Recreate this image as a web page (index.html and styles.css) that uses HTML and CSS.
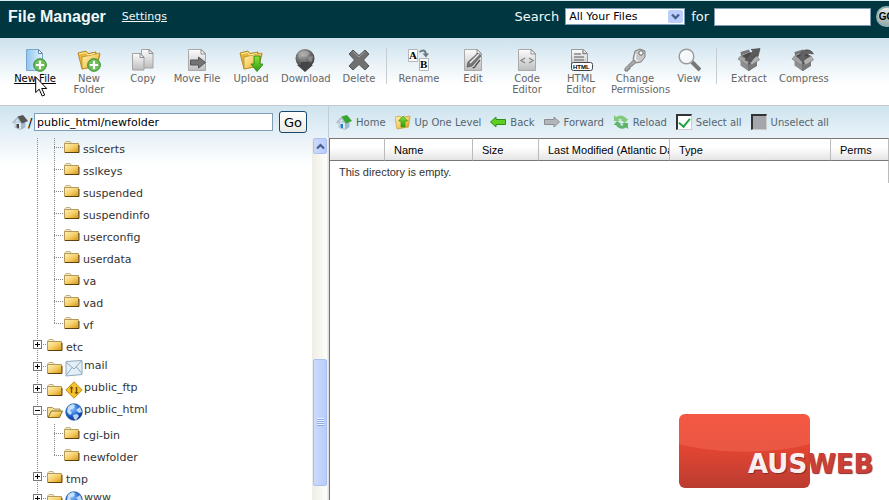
FILE: index.html
```html
<!DOCTYPE html>
<html lang="en">
<head>
    <meta charset="UTF-8">
    <meta name="viewport" content="width=device-width, initial-scale=1.0">
    <title>File Manager</title>
    <link rel="stylesheet" href="styles.css">
</head>
<body>
    <!-- shared icon shapes -->
    <svg class="sprites" width="0" height="0" aria-hidden="true">
        <defs>
            <linearGradient id="gold" x1="0" y1="0" x2="1" y2="1">
                <stop offset="0" stop-color="#fff3bd"/>
                <stop offset=".5" stop-color="#f6d06a"/>
                <stop offset="1" stop-color="#d9920f"/>
            </linearGradient>
            <linearGradient id="paper" x1="0" y1="0" x2="0" y2="1">
                <stop offset="0" stop-color="#fdfdfd"/>
                <stop offset="1" stop-color="#bdbdbd"/>
            </linearGradient>
            <linearGradient id="bluepaper" x1="0" y1="0" x2="1" y2="0">
                <stop offset="0" stop-color="#8fc4ee"/>
                <stop offset="1" stop-color="#e6f4fd"/>
            </linearGradient>
            <linearGradient id="leaf" x1="0" y1="0" x2="0" y2="1">
                <stop offset="0" stop-color="#8be53c"/>
                <stop offset="1" stop-color="#2c9a12"/>
            </linearGradient>
            <radialGradient id="ball" cx=".4" cy=".3" r=".7">
                <stop offset="0" stop-color="#aaa"/>
                <stop offset="1" stop-color="#3c3c3c"/>
            </radialGradient>
            <radialGradient id="earth" cx=".4" cy=".3" r=".7">
                <stop offset="0" stop-color="#8fc3ff"/>
                <stop offset=".6" stop-color="#2268d0"/>
                <stop offset="1" stop-color="#0a2d80"/>
            </radialGradient>
        </defs>
        <symbol id="folder" viewBox="0 0 16 14">
            <path d="M1 4V2.500L2 1.500h4L7.500 3.500" fill="#f4ecd0" stroke="#c4b078"/>
            <path d="M.5 3.500h14v9H.5z" fill="url(#gold)" stroke="#b39a5c"/>
            <path d="M1 12.500h14V5" fill="none" stroke="#5c4210"/>
        </symbol>
        <symbol id="folder-open" viewBox="0 0 16 14">
            <path d="M.5 12V2.500h5L7 4h6v2" fill="#f5e09a" stroke="#a8925a"/>
            <path d="M1 12.500L4.500 6h11L12.500 12.500z" fill="url(#gold)" stroke="#8a6a20"/>
        </symbol>
        <symbol id="bigfolder" viewBox="0 0 24 24">
            <path d="M1 5l8-2 2 2.500 8-1.500v3l4-1-3 12-15 3z" fill="#e9b733" stroke="#a87a10" stroke-width=".8"/>
            <path d="M5 9l18-4-4 13-14 3z" fill="url(#gold)" stroke="#b88a1c" stroke-width=".8"/>
            <path d="M2 6l7-1.500L10.500 7l7.500-1.500" fill="none" stroke="#fff2b0"/>
        </symbol>
        <symbol id="page" viewBox="0 0 24 24">
            <path d="M3.500 1.500h13l4 4v17h-17z" fill="url(#paper)" stroke="#a9a9a9"/>
            <path d="M16 1.500v4.500h4.500z" fill="#fff" stroke="#8e8e8e"/>
        </symbol>
        <symbol id="plus" viewBox="0 0 14 14">
            <circle cx="7" cy="7" r="6.300" fill="#6fbd5b" stroke="#2f8b2d"/>
            <path d="M7 2.800v8.400M2.800 7h8.400" stroke="#fff" stroke-width="2.200"/>
        </symbol>
        <symbol id="box" viewBox="0 0 24 24">
            <path d="M4 8l9-4 7 4v9l-8 6-8-6z" fill="#4c4c4c"/>
            <path d="M3.500 12l8 4.500V23l-8-5.500z" fill="#8d8d8d"/>
            <path d="M11.500 16.500L20 12v6l-8.500 5z" fill="#787878"/>
            <path d="M1 11l3-3.500 8 5-1.500 5z" fill="#a2a2a2" stroke="#737373" stroke-width=".6"/>
            <path d="M22.500 12L20 8l-8 4.500 2.500 4.500z" fill="#b0b0b0" stroke="#777" stroke-width=".6"/>
            <path d="M4 7.500L3.500 4 12 1.500l1 2.500z" fill="#777"/>
        </symbol>
        <symbol id="globe" viewBox="0 0 18 18">
            <circle cx="9" cy="9" r="8.300" fill="url(#earth)" stroke="#24539a" stroke-width=".7"/>
            <path d="M3 4q4-4 7-2l-1 3-4 2 2 3-2 2-3-3zM11 7l4-3 2 5-3 1zM8 12l4-1 2 2-3 4-2-1z" fill="#d9ecff" opacity=".85"/>
        </symbol>
        <symbol id="house" viewBox="0 0 16 16">
            <path d="M3 8h10v5l-4 2.500-6-2z" fill="#dfe9f2" stroke="#8fa6b8" stroke-width=".6"/>
            <path d="M9 9l4-2v6l-4 2.500z" fill="#9db9d0"/>
            <path d="M4.500 10h2.500v4.500l-2.500-1z" class="door"/>
            <path d="M0 8.500L5.500 2.500 10 9l-1 1-3.700-5L1.500 9.500z" fill="#a9bdc8"/>
            <path d="M5.500 2.500L11 1l5 6-6 2.500z" fill="currentColor"/>
        </symbol>
    </svg>

    <header class="topbar">
        <h1>File Manager</h1>
        <a class="settings" href="#">Settings</a>
        <form class="search">
            <label for="scope">Search</label>
            <span class="dropdown">
                <select id="scope">
                    <option>All Your Files</option>
                    <option>This Directory</option>
                </select>
                <span class="arrow"><svg width="9" height="7" viewBox="0 0 9 7"><path d="M1 1.500l3.500 3.500L8 1.500" fill="none" stroke="#4a5f8e" stroke-width="2.400"/></svg></span>
            </span>
            <label for="query">for</label>
            <input type="text" id="query">
            <button type="submit" class="go-round">GO</button>
        </form>
    </header>

    <nav class="toolbar">
        <a href="#" class="tool active"><svg viewBox="0 0 24 24"><path d="M3.500 1.500h12l4 4v17h-16z" fill="url(#bluepaper)" stroke="#78a8cf"/><path d="M15.500 1.500v4h4z" fill="#fff" stroke="#5c86a8"/><use href="#plus" x="10" y="10" width="14" height="14"/></svg>New File</a>
        <a href="#" class="tool"><svg viewBox="0 0 24 24"><use href="#bigfolder" width="24" height="24"/><use href="#plus" x="10" y="10" width="14" height="14"/></svg>New Folder</a>
        <a href="#" class="tool"><svg viewBox="0 0 24 24"><path d="M10.500 1.500h8l3.500 3.500v15H10.500z" fill="url(#paper)" stroke="#a3a3a3"/><path d="M18 1.500V5.500h4z" fill="#fff" stroke="#8e8e8e"/><path d="M1.500 5.500h8l3.500 3.500v13H1.500z" fill="url(#paper)" stroke="#a3a3a3"/><path d="M9 5.500v4h4z" fill="#fff" stroke="#8e8e8e"/></svg>Copy</a>
        <a href="#" class="tool"><svg viewBox="0 0 24 24"><use href="#page" width="24" height="24"/><path d="M5.500 12h8V9l7 5.500-7 5.500v-3h-8z" fill="#737373" stroke="#555"/></svg>Move File</a>
        <a href="#" class="tool"><svg viewBox="0 0 24 24"><use href="#bigfolder" width="24" height="24"/><path d="M15 8h6v8h3.500L18 23.500 12 16h3z" fill="url(#leaf)" stroke="#228012" stroke-width=".8"/></svg>Upload</a>
        <a href="#" class="tool"><svg viewBox="0 0 24 24"><circle cx="12" cy="10.500" r="9.500" fill="url(#ball)"/><path d="M5 5q7-5 12 0l-3 4-5-1-3 3zM15 9l5-1-1 6-3-1z" fill="#bbb" opacity=".45"/><path d="M8 14h8v3h4l-8 7-8-7h4z" fill="#454545"/></svg>Download</a>
        <a href="#" class="tool"><svg viewBox="0 0 24 24"><path d="M6 2l6 5.500L18 2l4 4-5.500 6 5.500 6-4 4-6-5.500L6 22l-4-4 5.500-6L2 6z" fill="#707070" stroke="#555"/><path d="M6 3.500l6 5.500 6-5.500" fill="none" stroke="#a0a0a0"/></svg>Delete</a>
        <span class="divider"></span>
        <a href="#" class="tool"><svg viewBox="0 0 24 24"><path d="M1.500 1.500h9v12h-9zM12.500 10.500h9v12h-9z" fill="#fff" stroke="#b5b5b5"/><text x="2" y="11" class="glyph">A</text><text x="13" y="20" class="glyph">B</text><path d="M12.500 4q6-4 6.500 3" fill="none" stroke="#6d7983" stroke-width="2"/><path d="M15.500 5.500h6.500L19 9.500z" fill="#6d7983"/></svg>Rename</a>
        <a href="#" class="tool"><svg viewBox="0 0 24 24"><use href="#page" width="24" height="24"/><path d="M6 19l1-5L17 5l3 3-9 10z" fill="#777" stroke="#444" stroke-width=".6"/><path d="M9 15l9-9" stroke="#eee" stroke-width="1.400"/><path d="M12 19q1 2 3-2l4-5" fill="none" stroke="#555" stroke-width="1.500"/></svg>Edit</a>
        <a href="#" class="tool"><svg viewBox="0 0 24 24"><use href="#page" width="24" height="24"/><path d="M10 10l-4 2.500 4 2.500M14 10l4 2.500-4 2.500" fill="none" stroke="#858585" stroke-width="1.300"/></svg>Code Editor</a>
        <a href="#" class="tool"><svg viewBox="0 0 24 24"><path d="M2.500 1.500h12l4 4v14h-16z" fill="url(#paper)" stroke="#999"/><path d="M14 1.500v4h4M5 6h7M5 9h10M5 12h10" fill="none" stroke="#888" stroke-width="1.300"/><rect x="2.500" y="14.500" width="21" height="8" rx="2" fill="#fff" stroke="#444"/><text x="4" y="21" class="tag">HTML</text></svg>HTML Editor</a>
        <a href="#" class="tool"><svg viewBox="0 0 24 24"><path d="M11.500 11L2 20.500v2.500h3v-2h2v-2.500l2-.500 5-4.500" fill="#aaa" stroke="#777"/><path d="M12 3l5-2 5 2v6l-4 5-5 1-3-4z" fill="#c9c9c9" stroke="#7d7d7d"/><circle cx="18" cy="5" r="2.200" fill="#f3f8fb" stroke="#666"/><path d="M13 6l-1 5 3 2" fill="none" stroke="#fff"/></svg>Change Permissions</a>
        <a href="#" class="tool"><svg viewBox="0 0 24 24"><path d="M15 14l8 8" stroke="#777" stroke-width="4"/><circle cx="9.500" cy="8.500" r="7.300" fill="#f4f7f9" stroke="#999" stroke-width="1.400"/><path d="M4.500 9q0-5 5-5.500" fill="none" stroke="#fff" stroke-width="2"/></svg>View</a>
        <span class="divider"></span>
        <a href="#" class="tool"><svg viewBox="0 0 24 24"><use href="#box" width="24" height="24"/><path d="M8 12l8-9-2-1.500 9-1-2 8-2-1.500-5 7z" fill="#5b5b5b" stroke="#404040" stroke-width=".6"/></svg>Extract</a>
        <a href="#" class="tool"><svg viewBox="0 0 24 24"><use href="#box" width="24" height="24"/><path d="M22.500 6Q20 1 14 2 9 3.500 9 8H6l5.500 6L17 8h-3q1-3.500 8.500-2z" fill="#626262" stroke="#444" stroke-width=".6"/></svg>Compress</a>
    </nav>

    <main class="workspace">
        <aside class="sidebar">
            <form class="location">
                <label for="path"><svg class="home" width="16" height="16"><use href="#house"/></svg>/</label>
                <input type="text" id="path" value="public_html/newfolder">
                <button type="submit">Go</button>
            </form>
            <div class="tree-pane">
                <ul class="tree">
                    <li>
                        <ul>
                            <li><svg class="f"><use href="#folder"/></svg><a href="#">sslcerts</a></li>
                            <li><svg class="f"><use href="#folder"/></svg><a href="#">sslkeys</a></li>
                            <li><svg class="f"><use href="#folder"/></svg><a href="#">suspended</a></li>
                            <li><svg class="f"><use href="#folder"/></svg><a href="#">suspendinfo</a></li>
                            <li><svg class="f"><use href="#folder"/></svg><a href="#">userconfig</a></li>
                            <li><svg class="f"><use href="#folder"/></svg><a href="#">userdata</a></li>
                            <li><svg class="f"><use href="#folder"/></svg><a href="#">va</a></li>
                            <li><svg class="f"><use href="#folder"/></svg><a href="#">vad</a></li>
                            <li><svg class="f"><use href="#folder"/></svg><a href="#">vf</a></li>
                        </ul>
                    </li>
                    <li>
                        <div class="node"><button class="toggle" aria-label="Expand etc"></button><svg class="f"><use href="#folder"/></svg><a href="#">etc</a></div>
                    </li>
                    <li>
                        <div class="node special"><button class="toggle" aria-label="Expand mail"></button><svg class="f"><use href="#folder"/></svg><svg class="kind" viewBox="0 0 18 18"><path d="M1 2.500l16-1v14L1 17z" fill="#e3eef6" stroke="#8ea9bd"/><path d="M1.500 3.500L9 10l7.500-8M1.500 16L7 8.500M16.500 14l-5-6" fill="none" stroke="#8ba9c2"/></svg><a href="#">mail</a></div>
                    </li>
                    <li>
                        <div class="node special"><button class="toggle" aria-label="Expand public_ftp"></button><svg class="f"><use href="#folder"/></svg><svg class="kind" viewBox="0 0 18 18"><path d="M9 .8L17.200 9 9 17.200.8 9z" fill="#f5c22c" stroke="#c68d12"/><path d="M6.500 12V6M11.500 6v6" stroke="#72500a" stroke-width="1.400"/><path d="M4.500 7.500l2-2.500 2 2.500zM9.500 11l2 2.500 2-2.500z" fill="#72500a"/></svg><a href="#">public_ftp</a></div>
                    </li>
                    <li>
                        <div class="node special"><button class="toggle open" aria-label="Collapse public_html"></button><svg class="f"><use href="#folder-open"/></svg><svg class="kind"><use href="#globe"/></svg><a href="#">public_html</a></div>
                        <ul>
                            <li><svg class="f"><use href="#folder"/></svg><a href="#">cgi-bin</a></li>
                            <li><svg class="f"><use href="#folder"/></svg><a href="#">newfolder</a></li>
                        </ul>
                    </li>
                    <li>
                        <div class="node"><button class="toggle" aria-label="Expand tmp"></button><svg class="f"><use href="#folder"/></svg><a href="#">tmp</a></div>
                    </li>
                    <li>
                        <div class="node special"><button class="toggle" aria-label="Expand www"></button><svg class="f"><use href="#folder"/></svg><svg class="kind"><use href="#globe"/></svg><a href="#">www</a></div>
                    </li>
                </ul>
                <div class="scrollbar">
                    <button class="up" aria-label="Scroll up"><svg width="9" height="7" viewBox="0 0 9 7"><path d="M1 5.500L4.500 2 8 5.500" fill="none" stroke="#4a5f8e" stroke-width="2.200"/></svg></button>
                    <div class="track"></div>
                    <div class="thumb"><span></span></div>
                    <div class="rest"></div>
                </div>
            </div>
        </aside>

        <section class="files">
            <div class="actions">
                <a href="#"><svg class="green-roof"><use href="#house"/></svg>Home</a>
                <a href="#"><svg viewBox="0 0 16 16"><path d="M0 3l5-1 1 1.500 9-1.500-1.500 11L2 15z" fill="url(#gold)" stroke="#c79a2b" stroke-width=".7"/><path d="M8 2l4.500 5H10v6H6V7H3.500z" fill="url(#leaf)" stroke="#45951b" stroke-width=".7"/></svg>Up One Level</a>
                <a href="#"><svg viewBox="0 0 16 16"><path d="M.5 8L6 3v2.500h9.500v5H6V13z" fill="#5fce23" stroke="#2f8f16"/></svg>Back</a>
                <a href="#"><svg viewBox="0 0 16 16"><path d="M15.500 8L10 3v2.500H.5v5H10V13z" fill="#b3b7ba" stroke="#8a8e91"/></svg>Forward</a>
                <a href="#"><svg viewBox="0 0 16 16"><path d="M1 1l2 2q6-4 11 2l1.500 0-3.500 4-5-3.500 2.500 0Q7 4 5.500 5.500L7 7H1z" fill="#83c97c"/><path d="M15 15l-2-1.500q-6 3.500-10-2.500H.5L4 7l5 3.500H6.500Q8.500 12.500 10.500 11L9 9h6z" fill="#5fb46b"/></svg>Reload</a>
                <label><input type="checkbox" checked>Select all</label>
                <label><input type="checkbox" class="none">Unselect all</label>
            </div>
            <table>
                <colgroup>
                    <col class="c-icon"><col class="c-name"><col class="c-size"><col class="c-date"><col><col class="c-perms">
                </colgroup>
                <thead>
                    <tr><th></th><th>Name</th><th>Size</th><th>Last Modified (Atlantic Day</th><th>Type</th><th>Perms</th></tr>
                </thead>
                <tbody>
                    <tr><td colspan="6">This directory is empty.</td></tr>
                </tbody>
            </table>
        </section>
    </main>

    <div class="brand"><span>AUS</span>WEB</div>
    <svg class="pointer" width="13" height="21" viewBox="0 0 13 21"><path d="M.7 1v15.500l3.500-3.300 3 6.800 2.500-1-3-6.500h5z" fill="#fff" stroke="#000"/></svg>
</body>
</html>
```
FILE: styles.css
```css
* {
    box-sizing: border-box;
}

body {
    display: flex;
    flex-direction: column;
    height: 100vh;
    margin: 0;
    overflow: hidden;
    background: white;
    color: #333;
    font: 11px "DejaVu Sans", Verdana, sans-serif;
}

.sprites {
    position: absolute;
}

svg {
    flex: none;
}

a {
    color: inherit;
    text-decoration: none;
}

input, select, button {
    margin: 0;
    font: inherit;
}

ul {
    list-style: none;
    margin: 0;
    padding: 0;
}

/* top bar */
.topbar {
    display: flex;
    flex: none;
    align-items: center;
    height: 38px;
    padding: 0 0 6px 8px;
    border-top: 1px solid #d5eef0;
    background: #003640;
    color: #f2f8f8;
}

.topbar h1 {
    margin: 0 16px 0 0;
    font: bold 16px "Liberation Sans", Arial, sans-serif;
}

.topbar .settings {
    text-decoration: underline;
}

.search {
    display: flex;
    align-items: center;
    margin-left: auto;
    margin-right: -8px;
    font-size: 13px;
}

.dropdown {
    position: relative;
    margin: 0 6px;
}

.dropdown select {
    display: block;
    width: 120px;
    height: 17px;
    padding: 0 3px;
    border: 1px solid #7f9db9;
    border-radius: 0;
    appearance: none;
    background: white;
    color: black;
    font-size: 11px;
}

.arrow {
    position: absolute;
    top: 2px;
    right: 2px;
    display: grid;
    place-items: center;
    width: 15px;
    height: 13px;
    border-radius: 2px;
    background: #bccffb;
    pointer-events: none;
}

.search input {
    width: 157px;
    height: 18px;
    margin: 0 5px;
    border: 1px solid #7f9db9;
    background: white;
}

.go-round {
    width: 21px;
    height: 21px;
    padding: 0;
    border: 2px solid #8fb0b5;
    border-radius: 50%;
    background: linear-gradient(#e9eeee, #9aa8a8);
    color: black;
    font: bold 10px "Liberation Sans", Arial, sans-serif;
}

/* toolbar */
.toolbar {
    display: flex;
    flex: none;
    height: 68px;
    padding: 10px 0 0 8px;
    border-bottom: 1px solid #c4cad2;
    background: linear-gradient(#cde2ee, white 70%);
    color: #666;
    font-size: 10px;
    line-height: 11px;
}

.tool {
    flex: none;
    width: 48px;
    margin: 0 3px;
    text-align: center;
}

.tool svg {
    display: block;
    width: 24px;
    height: 24px;
    margin: 0 auto 1px;
}

.tool.active {
    color: black;
    text-decoration: underline;
}

.glyph {
    font: bold 11px "Liberation Serif", serif;
}

.tag {
    font: bold 6px "Liberation Sans", Arial, sans-serif;
}

.divider {
    flex: none;
    width: 1px;
    height: 36px;
    margin-right: 5px;
    background: #c5ccd2;
}

/* main area */
.workspace {
    display: flex;
    flex: 1;
    min-height: 0;
    background: linear-gradient(#cfe4ef, white 60px);
}

.sidebar {
    display: flex;
    flex: none;
    flex-direction: column;
    width: 329px;
}

.location {
    display: flex;
    flex: none;
    align-items: center;
    height: 32px;
    padding-left: 12px;
    border-right: 1px solid #c0cdd7;
    color: black;
}

.location label {
    display: flex;
    align-items: center;
    width: 22px;
    font-size: 13px;
}

.home {
    color: #555;
    fill: #444;
}

.location input {
    width: 239px;
    height: 18px;
    padding: 0 2px;
    border: 1px solid #7f9db9;
    background: white;
    color: black;
}

.location button {
    width: 28px;
    height: 22px;
    margin-left: 6px;
    padding: 0;
    border: 1px solid #17466f;
    border-radius: 3px;
    background: linear-gradient(white, #ecece6);
    color: black;
    font-size: 13px;
}

.tree-pane {
    display: flex;
    flex: 1;
    min-height: 0;
    overflow: hidden;
}

.tree {
    flex: 1;
    padding-left: 37px;
}

.tree li {
    background: repeating-linear-gradient(#888 0 1px, transparent 1px 2px) 0 0 / 1px 100% no-repeat;
}

.tree ul {
    margin-left: 17px;
}

.tree ul li, .node {
    display: flex;
    align-items: center;
    height: 22px;
}

.tree ul li:last-child {
    background-size: 1px 10px;
}

.tree ul li::before {
    width: 9px;
    margin-bottom: 3px;
    border-top: 1px dotted #888;
    content: "";
}

.f {
    width: 16px;
    height: 14px;
    margin-bottom: 4px;
}

.tree ul .f {
    margin-left: 1px;
}

.tree a {
    margin-left: 3px;
}

.toggle {
    width: 9px;
    height: 9px;
    margin: 0 0 5px -4px;
    padding: 0;
    border: 1px solid #777;
    background: linear-gradient(black, black) center / 5px 1px no-repeat,
        linear-gradient(black, black) center / 1px 5px no-repeat, white;
}

.toggle.open {
    background: linear-gradient(black, black) center / 5px 1px no-repeat, white;
}

.toggle + .f {
    margin-left: 5px;
}

.node {
    background: repeating-linear-gradient(90deg, transparent 0 1px, #888 1px 2px) 5px 8px / 4px 1px no-repeat;
}

.kind {
    width: 18px;
    height: 18px;
    margin: 0 0 3px 2px;
}

.special .f {
    margin-bottom: 3px;
}

.special a {
    margin: 0 0 7px 1px;
}

/* scrollbar */
.scrollbar {
    display: flex;
    flex: none;
    flex-direction: column;
    width: 17px;
    padding-right: 2px;
    background: linear-gradient(90deg, #eeede5, #fefefb 15px, #ddd 16px);
}

.up, .thumb {
    display: grid;
    flex: none;
    place-items: center;
    margin-left: 1px;
    border: 1px solid #a9bff0;
    border-radius: 2px;
    background: linear-gradient(90deg, #cbdafd, #b9ccfa);
}

.up {
    height: 16px;
    padding: 0;
}

.track {
    flex: 206;
}

.thumb {
    flex: 126;
}

.thumb span {
    width: 7px;
    height: 8px;
    background: repeating-linear-gradient(#eef4ff 0 1px, #8ca6e2 1px 2px);
}

.rest {
    flex: 14;
}

/* file list */
.files {
    flex: 1;
    min-width: 0;
}

.actions {
    display: flex;
    align-items: center;
    gap: 9px;
    height: 32px;
    padding-left: 7px;
    color: #566570;
    font-size: 10px;
    white-space: nowrap;
}

.actions a, .actions label {
    display: flex;
    align-items: center;
    gap: 4px;
}

.actions svg {
    width: 16px;
    height: 16px;
}

.actions .green-roof {
    color: #35a52c;
    fill: #257fcb;
}

.actions input {
    display: grid;
    place-items: center;
    width: 16px;
    height: 16px;
    border: 2px solid #333;
    border-right: 1px solid #ccc;
    border-bottom: 1px solid #ccc;
    appearance: none;
    background: white;
}

.actions input:checked::before {
    width: 5px;
    height: 9px;
    margin-bottom: 2px;
    border: solid #20a640;
    border-width: 0 2px 2px 0;
    transform: rotate(40deg);
    content: "";
}

.actions input.none {
    background: #a5a5ac;
}

table {
    width: 100%;
    height: calc(100% - 32px);
    table-layout: fixed;
    border-spacing: 0;
    border-left: 1px solid #777;
    background: white;
    font-family: "Liberation Sans", Arial, sans-serif;
}

.c-icon {
    width: 55px;
}

.c-name {
    width: 88px;
}

.c-size {
    width: 66px;
}

.c-date {
    width: 131px;
}

.c-perms {
    width: 58px;
}

th {
    height: 23px;
    padding: 0 0 0 9px;
    overflow: hidden;
    border-top: 1px solid #777;
    border-right: 1px solid #bbb;
    border-bottom: 1px solid #777;
    background: linear-gradient(white 40%, #e4e4e4);
    color: black;
    font-weight: normal;
    text-align: left;
    white-space: nowrap;
}

td {
    padding: 5px 9px;
    background: linear-gradient(#bbb, #bbb) right 0 top 0 / 1px 22px no-repeat;
    vertical-align: top;
}

/* watermark */
.brand {
    position: absolute;
    right: 79px;
    bottom: 12px;
    width: 131px;
    height: 74px;
    padding: 34px 0 0 69px;
    border-radius: 6px;
    background: radial-gradient(ellipse 110px 38px at 50% 0, rgba(255, 130, 110, .3) 98%, transparent), linear-gradient(#f04630, #e04532 50%, #b93c30);
    color: #c9403a;
    font-size: 26px;
    font-weight: bold;
    line-height: 32px;
    text-shadow: 1px 1px 1px #8a2a28;
}

.brand span {
    color: #fbeeee;
}

.pointer {
    position: absolute;
    top: 76px;
    left: 35px;
}
```
